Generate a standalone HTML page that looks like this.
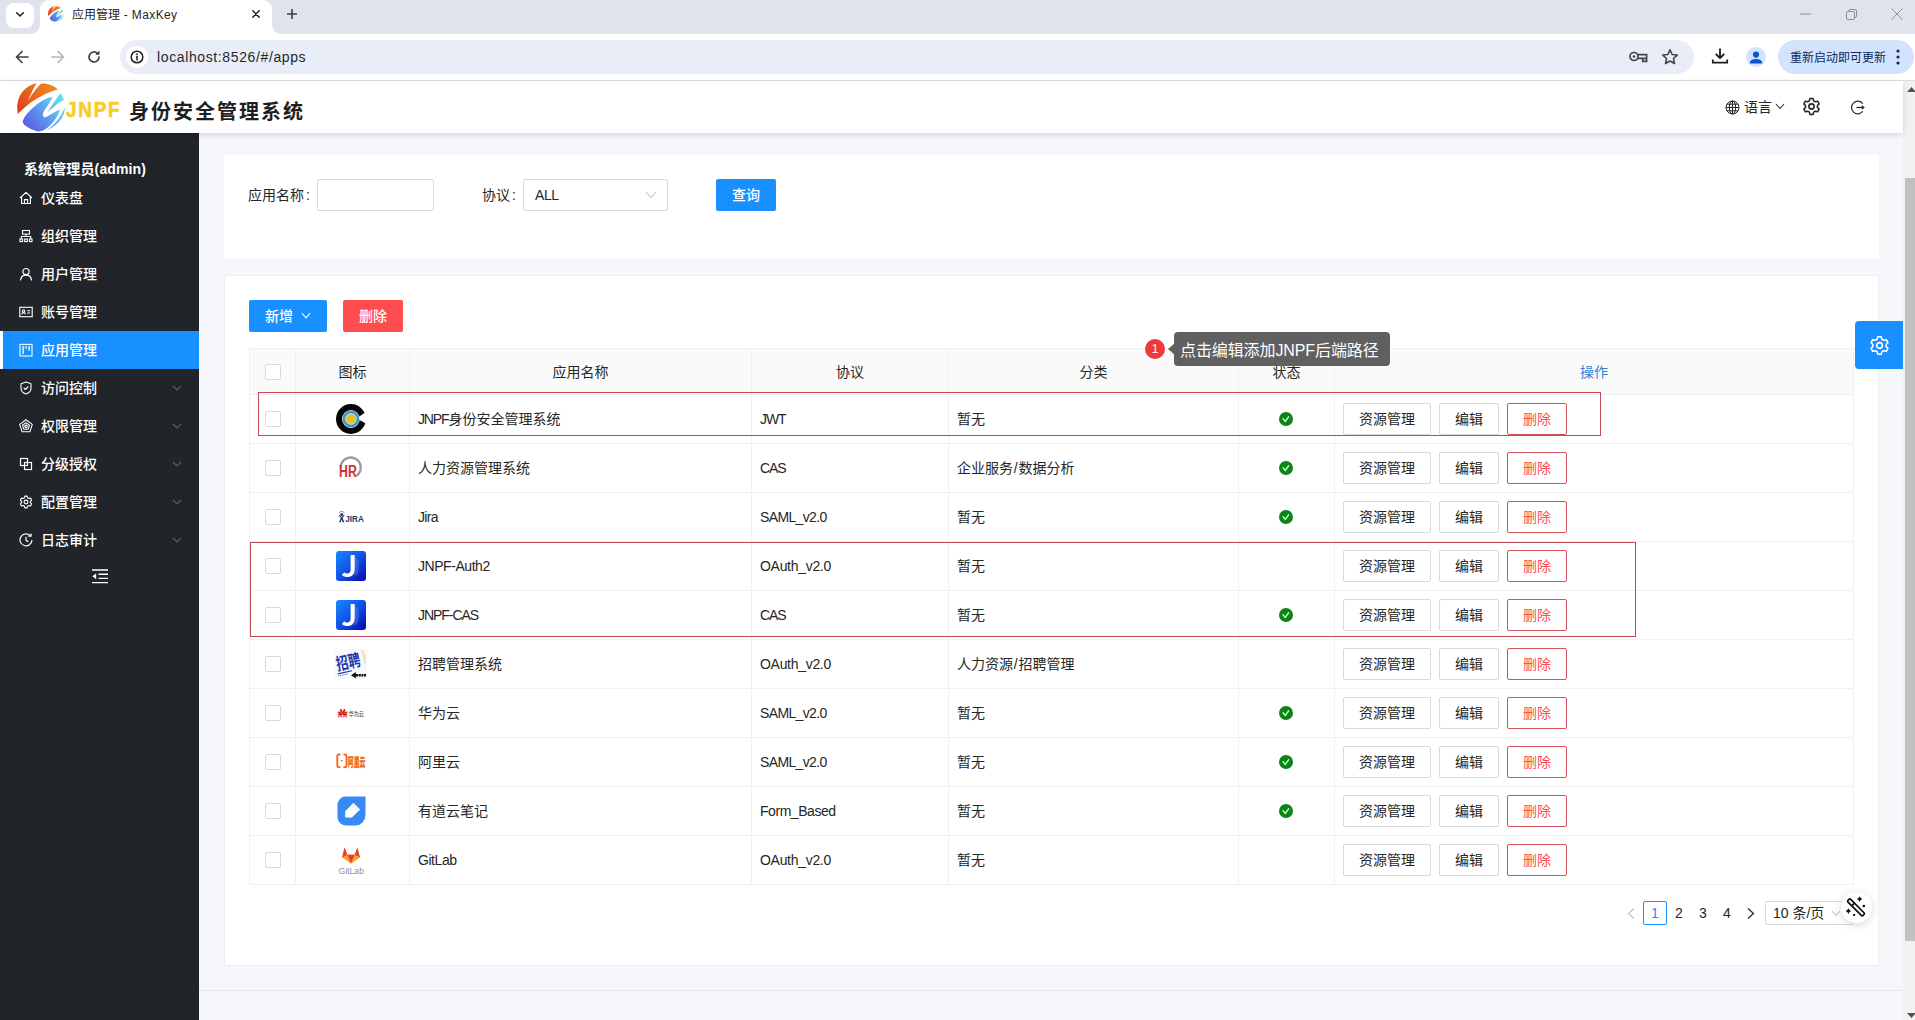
<!DOCTYPE html>
<html lang="zh-CN">
<head>
<meta charset="utf-8">
<title>应用管理 - MaxKey</title>
<style>
*{box-sizing:border-box;margin:0;padding:0}
html,body{width:1915px;height:1020px;overflow:hidden}
body{position:relative;background:#f5f7fa;font-family:"Liberation Sans","Noto Sans CJK SC",sans-serif;font-size:14px;color:#262626;line-height:1}
.abs{position:absolute}
svg{display:block}
/* ---------- browser chrome ---------- */
#tabstrip{left:0;top:0;width:1915px;height:34px;background:#dfe3ec}
#tabsearch{left:6px;top:3px;width:28px;height:25px;background:#fff;border-radius:8px}
#tab{left:40px;top:0;width:232px;height:34px;background:#fff;border-radius:9px 9px 0 0}
#tab:before,#tab:after{content:"";position:absolute;bottom:0;width:9px;height:9px}
#tab:before{left:-9px;background:radial-gradient(circle at 0 0,transparent 8.5px,#fff 9px)}
#tab:after{right:-9px;background:radial-gradient(circle at 100% 0,transparent 8.5px,#fff 9px)}
#tabtitle{left:72px;top:8px;font-size:12px;line-height:14px;color:#1f1f1f;white-space:nowrap}
#toolbar{left:0;top:34px;width:1915px;height:46px;background:#fff}
#tbline{left:0;top:80px;width:1915px;height:1px;background:#dcdee1}
#urlbar{left:120px;top:40px;width:1574px;height:34px;border-radius:17px;background:#e9edf7}
#urlinfo{left:126px;top:46px;width:22px;height:22px;border-radius:11px;background:#fff}
#urltext{left:157px;top:49px;font-size:14px;line-height:16px;color:#25282d;white-space:nowrap;letter-spacing:.62px}
#avatar{left:1746px;top:47px;width:20px;height:20px;border-radius:10px;background:#d3e3fd;overflow:hidden}
#upd{left:1778px;top:40px;width:136px;height:34px;border-radius:17px;background:#d3e3fd}
#updtext{left:1790px;top:51px;font-size:12px;line-height:14px;color:#0b2a5c;white-space:nowrap}
/* ---------- app header ---------- */
#hdr{left:0;top:81px;width:1903px;height:52px;background:#fff;box-shadow:0 2px 6px rgba(0,0,0,.13);z-index:5}
#jnpf{left:66px;top:98px;font-size:21.5px;line-height:24px;font-weight:700;letter-spacing:2px;transform:scaleX(.88);transform-origin:0 0;-webkit-text-stroke:.6px #f8cb28;color:#f8cb28;z-index:6;white-space:nowrap}
#sysname{left:129px;top:100px;font-size:20px;line-height:24px;font-weight:700;letter-spacing:2px;color:#1f1f1f;z-index:6;white-space:nowrap}
#lang{left:1744px;top:99px;font-size:14px;line-height:16px;color:#262626;z-index:6;white-space:nowrap}
/* ---------- sidebar ---------- */
#side{left:0;top:133px;width:199px;height:887px;background:#212429}
#who{left:24px;top:161px;letter-spacing:.12px;font-size:14px;line-height:16px;font-weight:700;color:#fff;white-space:nowrap}
.mi{position:absolute;left:0;width:199px;height:38px;color:#fff;font-weight:500;font-size:14px;line-height:38px;white-space:nowrap}
.mi span{position:absolute;left:41px;top:0}
.mi svg{position:absolute;left:19px;top:12px}
.mi svg.ar{left:172px;top:14px}
.mi.on{background:#1890ff;border-left:3px solid #fff}
.mi.on span{left:38px}
.mi.on svg{left:16px}
/* ---------- scrollbar ---------- */
#sbtrack{left:1903px;top:81px;width:12px;height:939px;background:#f1f1f1}
#sbthumb{left:1905px;top:178px;width:10px;height:763px;background:#c1c1c1}
/* ---------- cards ---------- */
#card1{left:224px;top:155px;width:1655px;height:104px;background:#fff}
#card2{left:224px;top:275px;width:1655px;height:691px;background:#fff;border:1px solid #f0f0f0}
.lbl{position:absolute;font-size:14px;line-height:16px;color:#262626;white-space:nowrap}
.inp{position:absolute;height:32px;border:1px solid #d9d9d9;border-radius:2px;background:#fff}
.btn{position:absolute;height:32px;border-radius:2px;font-size:14px;line-height:32px;text-align:center;white-space:nowrap}
.btn.pri{background:#1890ff;color:#fff;font-weight:500}
.btn.dan{background:#ff4d4f;color:#fff;font-weight:500}
.btn.def{background:#fff;border:1px solid #d9d9d9;color:#262626;line-height:30px}
.btn.dl{background:#fff;border:1px solid #d4505a;color:#ff4d4f;line-height:30px}
#footline{left:199px;top:990px;width:1704px;height:1px;background:#e6e8ec}
</style>
</head>
<body>
<div id="tabstrip" class="abs"></div>
<div id="tabsearch" class="abs"></div>
<svg class="abs" style="left:15px;top:10.500px" width="10" height="6.700" viewBox="0 0 12 8"><path d="M2 2l4 4 4-4" fill="none" stroke="#1f1f1f" stroke-width="1.8" stroke-linecap="round" stroke-linejoin="round"/></svg>
<div id="tab" class="abs"></div>
<svg class="abs" style="left:47px;top:5px" width="17.500" height="17.500" viewBox="0 0 1020 1020"><use href="#logo"/></svg>
<div id="tabtitle" class="abs">应用管理<span style="letter-spacing:.38px"> - MaxKey</span></div>
<svg class="abs" style="left:252px;top:10px" width="8" height="8" viewBox="0 0 8 8"><path d="M.8 .8l6.400 6.400M7.200 .8L.8 7.200" stroke="#1f1f1f" stroke-width="1.500" stroke-linecap="round"/></svg>
<svg class="abs" style="left:287px;top:9px" width="10" height="10" viewBox="0 0 10 10"><path d="M5 .5v9M.5 5h9" stroke="#3c4043" stroke-width="1.600" stroke-linecap="round"/></svg>
<!-- window controls -->
<svg class="abs" style="left:1800px;top:13px" width="11" height="2" viewBox="0 0 11 2"><path d="M0 1h11" stroke="#8a8f98" stroke-width="1"/></svg>
<svg class="abs" style="left:1846px;top:9px" width="11" height="11" viewBox="0 0 11 11"><rect x=".5" y="2.5" width="8" height="8" rx="1.5" fill="none" stroke="#8a8f98"/><path d="M2.5 2.5v-.5a1.5 1.5 0 0 1 1.5-1.5h5a1.5 1.5 0 0 1 1.5 1.5v5a1.5 1.5 0 0 1-1.5 1.5h-.5" fill="none" stroke="#8a8f98"/></svg>
<svg class="abs" style="left:1891px;top:8px" width="12" height="12" viewBox="0 0 12 12"><path d="M.5.5l11 11M11.500 .5l-11 11" stroke="#8a8f98" stroke-width="1"/></svg>
<!-- toolbar -->
<div id="toolbar" class="abs"></div>
<div id="tbline" class="abs"></div>
<svg class="abs" style="left:15px;top:50px" width="14" height="14" viewBox="0 0 14 14"><path d="M13 7H2M7 1.500L1.500 7 7 12.500" fill="none" stroke="#3c4043" stroke-width="1.7" stroke-linecap="round" stroke-linejoin="round"/></svg>
<svg class="abs" style="left:51px;top:50px" width="14" height="14" viewBox="0 0 14 14"><path d="M1 7h11M7 1.500L12.500 7 7 12.500" fill="none" stroke="#b4b7bc" stroke-width="1.7" stroke-linecap="round" stroke-linejoin="round"/></svg>
<svg class="abs" style="left:86px;top:49px" width="16" height="16" viewBox="0 0 16 16"><path d="M13 8a5 5 0 1 1-1.600-3.700" fill="none" stroke="#3c4043" stroke-width="1.7" stroke-linecap="round"/><path d="M13.500 1.500v4.200H9.300z" fill="#3c4043"/></svg>
<div id="urlbar" class="abs"></div>
<div id="urlinfo" class="abs"></div>
<svg class="abs" style="left:130px;top:50px" width="14" height="14" viewBox="0 0 14 14"><circle cx="7" cy="7" r="5.800" fill="none" stroke="#1f1f1f" stroke-width="1.500"/><path d="M7 6.300v3.700" stroke="#1f1f1f" stroke-width="1.500" stroke-linecap="round"/><circle cx="7" cy="4.100" r=".95" fill="#1f1f1f"/></svg>
<div id="urltext" class="abs">localhost:8526/#/apps</div>
<!-- key -->
<svg class="abs" style="left:1629px;top:51px" width="19" height="12" viewBox="0 0 19 12"><circle cx="5" cy="5.500" r="4" fill="none" stroke="#444746" stroke-width="1.700"/><circle cx="5" cy="5.500" r="1.300" fill="#444746"/><path d="M9 3.600h8.600v3.800M13.800 7.400h3.800v3h-3.800zM9 7.400h5" fill="none" stroke="#444746" stroke-width="1.700"/></svg>
<!-- star -->
<svg class="abs" style="left:1661px;top:48px" width="18" height="18" viewBox="0 0 18 18"><path d="M9 1.800l2.150 4.700 5.100.55-3.800 3.450 1.050 5.050L9 13l-4.500 2.550 1.050-5.050-3.800-3.450 5.100-.55z" fill="none" stroke="#444746" stroke-width="1.600" stroke-linejoin="round"/></svg>
<!-- download -->
<svg class="abs" style="left:1711px;top:47px" width="18" height="18" viewBox="0 0 18 18"><path d="M9 1.500v9.500M4.800 7L9 11.200 13.200 7M1.800 12.500v3.200h14.400v-3.200" fill="none" stroke="#1f1f1f" stroke-width="1.800" stroke-linejoin="round"/></svg>
<div id="avatar" class="abs"><svg width="20" height="20" viewBox="0 0 20 20"><circle cx="10" cy="7.600" r="3.100" fill="#0b57d0"/><path d="M3.800 16.400c0-3.200 3.100-4.400 6.200-4.400s6.200 1.200 6.200 4.400z" fill="#0b57d0"/></svg></div>
<div id="upd" class="abs"></div>
<div id="updtext" class="abs">重新启动即可更新</div>
<svg class="abs" style="left:1896px;top:49px" width="4" height="16" viewBox="0 0 4 16"><circle cx="2" cy="2" r="1.600" fill="#0b2a5c"/><circle cx="2" cy="8" r="1.600" fill="#0b2a5c"/><circle cx="2" cy="14" r="1.600" fill="#0b2a5c"/></svg>

<svg width="0" height="0" style="position:absolute"><defs>
<linearGradient id="lgO" gradientUnits="userSpaceOnUse" x1="80" y1="600" x2="800" y2="100"><stop offset="0" stop-color="#e03c1e"/><stop offset=".5" stop-color="#ea6a1c"/><stop offset="1" stop-color="#ee8e1e"/></linearGradient>
<linearGradient id="lgB" gradientUnits="userSpaceOnUse" x1="200" y1="880" x2="930" y2="300"><stop offset="0" stop-color="#5c5ade"/><stop offset=".45" stop-color="#5b97f3"/><stop offset=".8" stop-color="#5fd0ea"/><stop offset="1" stop-color="#62e2ee"/></linearGradient>
<g id="logo">
<path d="M75 640C40 500 70 330 170 210 240 130 330 80 430 60 380 130 320 260 268 395 330 290 420 150 510 72 620 50 740 100 830 180 650 220 450 330 300 440 200 520 120 590 75 640z" fill="url(#lgO)"/>
<path d="M165 780C180 700 300 560 420 470 520 390 640 330 730 322 700 400 620 500 560 600 530 650 540 705 595 705 680 660 780 590 865 555 850 640 780 760 690 850 630 910 560 960 480 975 380 960 250 900 190 840 170 815 162 800 165 780z" fill="url(#lgB)"/>
<path d="M880 245L945 380C880 400 800 470 740 520L630 610C700 500 800 350 880 245z" fill="url(#lgB)"/>
<path d="M955 520C975 640 880 830 620 950 760 860 890 700 955 520z" fill="url(#lgB)"/>
</g>
<g id="gear" fill="none" stroke-linejoin="round"><path d="M14.72 4.90 L13.95 1.99 L10.05 1.99 L9.28 4.90 L7.22 6.09 L4.30 5.31 L2.36 8.68 L4.49 10.81 L4.49 13.19 L2.36 15.32 L4.30 18.69 L7.22 17.91 L9.28 19.10 L10.05 22.01 L13.95 22.01 L14.72 19.10 L16.78 17.91 L19.70 18.69 L21.64 15.32 L19.51 13.19 L19.51 10.81 L21.64 8.68 L19.70 5.31 L16.78 6.09Z"/><circle cx="12" cy="12" r="3.300"/></g>
</defs></svg>
<div id="hdr" class="abs"></div>
<svg class="abs" style="left:14px;top:80px;z-index:6" width="54" height="54" viewBox="0 0 1020 1020"><use href="#logo"/></svg>
<div id="jnpf" class="abs">JNPF</div>
<div id="sysname" class="abs">身份安全管理系统</div>
<!-- globe -->
<svg class="abs" style="left:1724.500px;top:99.500px;z-index:6" width="15" height="15" viewBox="0 0 15 15"><g fill="none" stroke="#262626" stroke-width="1"><circle cx="7.500" cy="7.500" r="6.500"/><ellipse cx="7.500" cy="7.500" rx="3.200" ry="6.500"/><path d="M7.500 1v13M1 7.500h13M2 4.200h11M2 10.800h11"/></g></svg>
<div id="lang" class="abs">语言</div>
<svg class="abs" style="left:1775px;top:103px;z-index:6" width="10" height="7" viewBox="0 0 10 7"><path d="M1 1l4 4.500L9 1" fill="none" stroke="#262626" stroke-width="1.100"/></svg>
<!-- gear -->
<svg class="abs" style="left:1802px;top:97px;z-index:6" width="19" height="19" viewBox="0 0 24 24"><use href="#gear" stroke="#262626" stroke-width="2"/></svg>
<!-- logout -->
<svg class="abs" style="left:1850px;top:99.500px;z-index:6" width="16" height="15" viewBox="0 0 16 15"><path d="M12.800 3.600A6.300 6.300 0 1 0 12.800 11.400" fill="none" stroke="#262626" stroke-width="1.200"/><path d="M6.500 7.500h6.500" stroke="#262626" stroke-width="1.300"/><path d="M11.800 5.200l3 2.300-3 2.300z" fill="#262626"/></svg>

<div id="side" class="abs"></div>
<div id="who" class="abs">系统管理员(admin)</div>
<div class="mi" style="top:179px"><svg width="14" height="14" viewBox="0 0 14 14"><path d="M1 7L7 1.300 13 7M2.600 5.800v6.700h8.800V5.800M5.400 12.500V8.600h3.200v3.900" fill="none" stroke="#fff" stroke-width="1.100" stroke-linejoin="round"/></svg><span>仪表盘</span></div>
<div class="mi" style="top:217px"><svg width="14" height="14" viewBox="0 0 14 14"><g fill="none" stroke="#fff" stroke-width="1.100"><rect x="3.500" y="1.500" width="7" height="3.600"/><path d="M7 5.100v2.400M2.300 10V7.500h9.400V10"/><rect x="1" y="10" width="2.600" height="2.600"/><rect x="5.700" y="10" width="2.600" height="2.600"/><rect x="10.400" y="10" width="2.600" height="2.600"/></g></svg><span>组织管理</span></div>
<div class="mi" style="top:255px"><svg width="14" height="14" viewBox="0 0 14 14"><g fill="none" stroke="#fff" stroke-width="1.200"><circle cx="7" cy="4.600" r="3.100"/><path d="M1.600 13c.3-3 2.600-4.900 5.400-4.900s5.100 1.900 5.400 4.900" stroke-linecap="round"/></g></svg><span>用户管理</span></div>
<div class="mi" style="top:293px"><svg width="14" height="14" viewBox="0 0 14 14"><g fill="none" stroke="#fff" stroke-width="1.100"><rect x=".8" y="2.300" width="12.400" height="9.400"/><circle cx="4.600" cy="6" r="1.200"/><path d="M2.800 9.400c.2-1.300 1-1.800 1.800-1.800s1.600.5 1.800 1.800M8.200 5.700h3M8.200 8h3"/></g></svg><span>账号管理</span></div>
<div class="mi on" style="top:331px"><svg width="14" height="14" viewBox="0 0 14 14"><g fill="none" stroke="#fff" stroke-width="1.100"><rect x="1" y="1.400" width="12" height="11.600"/><path d="M4.100 2.900v8M7 2.900v2.800M10.100 2.900v4.800" stroke-width="1.300"/></g></svg><span>应用管理</span></div>
<div class="mi" style="top:369px"><svg width="14" height="14" viewBox="0 0 14 14"><g fill="none" stroke="#fff" stroke-width="1.100" stroke-linejoin="round"><path d="M7 1L2 2.800v4.400c0 2.800 2.200 4.800 5 5.800 2.800-1 5-3 5-5.800V2.800z"/><path d="M4.700 6.800l1.700 1.700 3-3.200"/></g></svg><span>访问控制</span><svg class="ar" width="10" height="10" viewBox="0 0 10 10"><path d="M1 3l4 4 4-4" fill="none" stroke="#5b5e64" stroke-width="1.200"/></svg></div>
<div class="mi" style="top:407px"><svg width="14" height="14" viewBox="0 0 14 14"><g fill="none" stroke="#fff" stroke-width="1.100" stroke-linejoin="round"><path d="M7 .8l6.300 4.600-2.400 7.400H3.100L.7 5.400z"/><path d="M7 3.600l3.500 2.600-1.300 4.100H4.800L3.500 6.200z"/><path d="M7 6l1.300 1-.5 1.600H6.200L5.700 7z"/></g></svg><span>权限管理</span><svg class="ar" width="10" height="10" viewBox="0 0 10 10"><path d="M1 3l4 4 4-4" fill="none" stroke="#5b5e64" stroke-width="1.200"/></svg></div>
<div class="mi" style="top:445px"><svg width="14" height="14" viewBox="0 0 14 14"><g fill="none" stroke="#fff" stroke-width="1.200"><rect x="1.500" y="1.500" width="7" height="7"/><rect x="5.500" y="5.500" width="7" height="7"/></g></svg><span>分级授权</span><svg class="ar" width="10" height="10" viewBox="0 0 10 10"><path d="M1 3l4 4 4-4" fill="none" stroke="#5b5e64" stroke-width="1.200"/></svg></div>
<div class="mi" style="top:483px"><svg width="14" height="14" viewBox="0 0 24 24"><use href="#gear" stroke="#fff" stroke-width="1.900"/></svg><span>配置管理</span><svg class="ar" width="10" height="10" viewBox="0 0 10 10"><path d="M1 3l4 4 4-4" fill="none" stroke="#5b5e64" stroke-width="1.200"/></svg></div>
<div class="mi" style="top:521px"><svg width="14" height="14" viewBox="0 0 14 14"><g fill="none" stroke="#fff" stroke-width="1.200"><path d="M11.800 3.200A6 6 0 1 0 13 7"/><path d="M7 3.800V7.300l2.400 1.500M9.300 3.200h2.700V.6"/></g></svg><span>日志审计</span><svg class="ar" width="10" height="10" viewBox="0 0 10 10"><path d="M1 3l4 4 4-4" fill="none" stroke="#5b5e64" stroke-width="1.200"/></svg></div>
<svg class="abs" style="left:92px;top:569px" width="16" height="15" viewBox="0 0 16 15"><path d="M0 1h16M6.500 5.200H16M6.500 9.400H16M0 13.600h16" stroke="#fff" stroke-width="1.400"/><path d="M4.200 4.300v6L.4 7.300z" fill="#fff"/></svg>
<div id="sbtrack" class="abs"></div>
<div id="sbthumb" class="abs"></div>
<svg class="abs" style="left:1907px;top:87px" width="8" height="5" viewBox="0 0 8 5"><path d="M0 5L4.500 0 9 5z" fill="#505050"/></svg>
<svg class="abs" style="left:1907px;top:1013px" width="8" height="5" viewBox="0 0 8 5"><path d="M0 0L4.500 5 9 0z" fill="#505050"/></svg>

<style>
#tbl{position:absolute;left:249px;top:348px;width:1605px;border-collapse:separate;border-spacing:0;table-layout:fixed;border-left:1px solid #f0f0f0;border-top:1px solid #f0f0f0;font-size:14px}
#tbl th,#tbl td{border-right:1px solid #f0f0f0;border-bottom:1px solid #f0f0f0;padding:0 8px;vertical-align:middle;white-space:nowrap;overflow:hidden}
#tbl th{height:46px;background:#fafafa;font-weight:400;text-align:center;color:#262626}
#tbl td{height:49px;background:#fff;text-align:left;color:#262626}
#tbl td.c,#tbl th.c{text-align:center}
#tbl td.c svg{margin:0 auto;position:relative;left:-1.500px}
#tbl td.c svg.ok{left:-.5px}
.l{letter-spacing:-.45px}
.cb{display:block;width:16px;height:16px;border:1px solid #d9d9d9;border-radius:2px;background:#fff;margin:0 auto}
.ops{position:relative;height:32px}
.ops .btn{top:0}
.pg{position:absolute;top:901px;height:24px;line-height:24px;font-size:14px;color:#262626;text-align:center;white-space:nowrap}
.redbox{position:absolute;border:1px solid #c04a56;z-index:3}
</style>
<div id="card1" class="abs"></div>
<div class="lbl" style="left:248px;top:187px">应用名称<span style="margin-left:2px">:</span></div>
<div class="inp" style="left:317px;top:179px;width:117px"></div>
<div class="lbl" style="left:482px;top:187px">协议<span style="margin-left:2px">:</span></div>
<div class="inp" style="left:523px;top:179px;width:145px"></div>
<div class="lbl l" style="left:535px;top:187px">ALL</div>
<svg class="abs" style="left:645px;top:191px" width="12" height="8" viewBox="0 0 12 8"><path d="M1 1l5 5.500L11 1" fill="none" stroke="#bfbfbf" stroke-width="1.100"/></svg>
<div class="btn pri" style="left:716px;top:179px;width:60px">查询</div>
<div id="card2" class="abs"></div>
<div class="btn pri" style="left:249px;top:300px;width:78px;text-align:left;padding-left:16px">新增</div>
<svg class="abs" style="left:301px;top:312px" width="10" height="8" viewBox="0 0 10 8"><path d="M.800 1l4.200 4.800L9.200 1" fill="none" stroke="#fff" stroke-width="1.100"/></svg>
<div class="btn dan" style="left:343px;top:300px;width:60px">删除</div>
<table id="tbl"><colgroup><col style="width:46px"><col style="width:114px"><col style="width:342px"><col style="width:197px"><col style="width:290px"><col style="width:96px"><col style="width:519px"></colgroup>
<tr><th><i class="cb"></i></th><th>图标</th><th>应用名称</th><th>协议</th><th>分类</th><th>状态</th><th style="color:#2b83d9">操作</th></tr>
<tr><td><i class="cb"></i></td><td class="c"><svg width="30" height="30" viewBox="0 0 30 30"><circle cx="14.900" cy="15" r="11.900" fill="none" stroke="#050505" stroke-width="6"/><path d="M20.500 14.400L31 7.400V20z" fill="#fff"/><circle cx="14.900" cy="15" r="8.400" fill="#3d97cb"/><circle cx="14.900" cy="15" r="5.700" fill="#cfe5f1"/><circle cx="14.900" cy="15" r="4.800" fill="#e2c11f"/></svg></td><td><span class="l" style="letter-spacing:-1.150px">JNPF</span>身份安全管理系统</td><td><span class="l" style="letter-spacing:-1.05px">JWT</span></td><td>暂无</td><td class="c"><svg class="ok" width="14" height="14" viewBox="0 0 14 14"><circle cx="7" cy="7" r="7" fill="#0b8518"/><path d="M3.700 6.400L6.300 9.300 9.900 4.300" fill="none" stroke="#d8ffd8" stroke-width="1.400"/></svg></td><td><div class="ops"><div class="btn def" style="left:0;width:88px">资源管理</div><div class="btn def" style="left:96px;width:60px">编辑</div><div class="btn dl" style="left:164px;width:60px">删除</div></div></td></tr>
<tr><td><i class="cb"></i></td><td class="c"><svg width="30" height="30" viewBox="0 0 30 30"><path d="M4.700 14.600A10 10 0 1 1 20.500 22.700" fill="none" stroke="#9c9c9c" stroke-width="2.400"/><text x="3" y="24.400" font-family="Liberation Sans,sans-serif" font-weight="700" font-size="16" fill="#d0312d" textLength="17.800" lengthAdjust="spacingAndGlyphs">HR</text></svg></td><td>人力资源管理系统</td><td><span class="l" style="letter-spacing:-1.15px">CAS</span></td><td>企业服务<span style="margin:0 .8px">/</span>数据分析</td><td class="c"><svg class="ok" width="14" height="14" viewBox="0 0 14 14"><circle cx="7" cy="7" r="7" fill="#0b8518"/><path d="M3.700 6.400L6.300 9.300 9.900 4.300" fill="none" stroke="#d8ffd8" stroke-width="1.400"/></svg></td><td><div class="ops"><div class="btn def" style="left:0;width:88px">资源管理</div><div class="btn def" style="left:96px;width:60px">编辑</div><div class="btn dl" style="left:164px;width:60px">删除</div></div></td></tr>
<tr><td><i class="cb"></i></td><td class="c"><svg width="30" height="30" viewBox="0 0 30 30"><g fill="#1f3b63"><circle cx="5.700" cy="12.600" r="1.500"/><path d="M2.600 13.200l2.200 2.700-1.800 4.400h1.700l1-2.700 1 2.700h1.700L6.600 15.900l2.200-2.700H7.400L5.700 15.300 4 13.200z"/><path d="M3.200 11.200a2.600 2.600 0 0 1 5 0" fill="none" stroke="#4a7ab5" stroke-width=".8"/></g><text x="9.200" y="20.300" font-family="Liberation Sans,sans-serif" font-weight="700" font-size="9.600" fill="#1f3b63" textLength="18.600" lengthAdjust="spacingAndGlyphs">JIRA</text></svg></td><td><span class="l" style="letter-spacing:-0.7px">Jira</span></td><td><span class="l" style="letter-spacing:-0.65px">SAML_v2.0</span></td><td>暂无</td><td class="c"><svg class="ok" width="14" height="14" viewBox="0 0 14 14"><circle cx="7" cy="7" r="7" fill="#0b8518"/><path d="M3.700 6.400L6.300 9.300 9.900 4.300" fill="none" stroke="#d8ffd8" stroke-width="1.400"/></svg></td><td><div class="ops"><div class="btn def" style="left:0;width:88px">资源管理</div><div class="btn def" style="left:96px;width:60px">编辑</div><div class="btn dl" style="left:164px;width:60px">删除</div></div></td></tr>
<tr><td><i class="cb"></i></td><td class="c"><svg width="30" height="30" viewBox="0 0 30 30"><defs><linearGradient id="jg5" x1="0" y1="0" x2="1" y2="1"><stop offset="0" stop-color="#178cff"/><stop offset=".5" stop-color="#1250e6"/><stop offset="1" stop-color="#0609a8"/></linearGradient></defs><rect width="30" height="30" rx="3" fill="url(#jg5)"/><path d="M18.700 5.200L22.600 9.800V19c0 3-1.600 5.600-4.600 6.600.500-2.600.700-4.600.700-7.100z" fill="#86a4ff" opacity=".3"/><path d="M14.600 4.100H18.700V18.500C18.700 23.500 15.500 26.100 11.500 26.100 9.300 26.100 7.300 25.300 6 23.900L8.200 21.200C9 22.200 10.200 22.600 11.300 22.600 13.400 22.600 14.600 21.200 14.600 18.500z" fill="#fff"/></svg></td><td><span class="l">JNPF-Auth2</span></td><td><span class="l" style="letter-spacing:-0.3px">OAuth_v2.0</span></td><td>暂无</td><td class="c"></td><td><div class="ops"><div class="btn def" style="left:0;width:88px">资源管理</div><div class="btn def" style="left:96px;width:60px">编辑</div><div class="btn dl" style="left:164px;width:60px">删除</div></div></td></tr>
<tr><td><i class="cb"></i></td><td class="c"><svg width="30" height="30" viewBox="0 0 30 30"><defs><linearGradient id="jg6" x1="0" y1="0" x2="1" y2="1"><stop offset="0" stop-color="#178cff"/><stop offset=".5" stop-color="#1250e6"/><stop offset="1" stop-color="#0609a8"/></linearGradient></defs><rect width="30" height="30" rx="3" fill="url(#jg6)"/><path d="M18.700 5.200L22.600 9.800V19c0 3-1.600 5.600-4.600 6.600.500-2.600.700-4.600.700-7.100z" fill="#86a4ff" opacity=".3"/><path d="M14.600 4.100H18.700V18.500C18.700 23.500 15.500 26.100 11.500 26.100 9.300 26.100 7.300 25.300 6 23.900L8.200 21.200C9 22.200 10.200 22.600 11.300 22.600 13.400 22.600 14.600 21.200 14.600 18.500z" fill="#fff"/></svg></td><td><span class="l" style="letter-spacing:-1.05px">JNPF-CAS</span></td><td><span class="l" style="letter-spacing:-1.15px">CAS</span></td><td>暂无</td><td class="c"><svg class="ok" width="14" height="14" viewBox="0 0 14 14"><circle cx="7" cy="7" r="7" fill="#0b8518"/><path d="M3.700 6.400L6.300 9.300 9.900 4.300" fill="none" stroke="#d8ffd8" stroke-width="1.400"/></svg></td><td><div class="ops"><div class="btn def" style="left:0;width:88px">资源管理</div><div class="btn def" style="left:96px;width:60px">编辑</div><div class="btn dl" style="left:164px;width:60px">删除</div></div></td></tr>
<tr><td><i class="cb"></i></td><td class="c"><svg width="32" height="30" viewBox="0 0 32 30"><rect x="0" y="0" width="32" height="30" rx="2" fill="#f7f8fc"/><path d="M24.500 .6c3.200.7 5.500 3.200 6 6.800.3 2.500-.2 5.600 1 7.600-2.700-1.300-3.200-4.200-3.500-6.800-.3-2.900-1.200-5.500-3.500-7.600z" fill="#f8dba6"/><g transform="rotate(-12 13 13)"><text x="1" y="19.200" font-family="Liberation Sans,Noto Sans CJK SC,sans-serif" font-weight="700" font-size="17" fill="#2635ad" textLength="24.500" lengthAdjust="spacingAndGlyphs">招聘</text><path d="M.5 22.400h14.500" stroke="#2635ad" stroke-width="1.200"/><path d="M.5 24.600h10" stroke="#6a76cc" stroke-width=".9" stroke-dasharray="1.200 .6"/></g><path d="M16 26.200l4.800-3.200v2h2.400v2.400h-2.400v2zM23.800 25h2v2.400h-2zM26.400 25h2v2.400h-2zM29 25h2v2.400h-2z" fill="#111"/></svg></td><td>招聘管理系统</td><td><span class="l" style="letter-spacing:-0.3px">OAuth_v2.0</span></td><td>人力资源<span style="margin:0 .8px">/</span>招聘管理</td><td class="c"></td><td><div class="ops"><div class="btn def" style="left:0;width:88px">资源管理</div><div class="btn def" style="left:96px;width:60px">编辑</div><div class="btn dl" style="left:164px;width:60px">删除</div></div></td></tr>
<tr><td><i class="cb"></i></td><td class="c"><svg width="30" height="30" viewBox="0 0 30 30"><g fill="#e2231a"><ellipse cx="6.60" cy="14.50" rx="0.85" ry="2.20" transform="rotate(-82 6.60 17.30)"/><ellipse cx="6.60" cy="14.00" rx="1.05" ry="2.70" transform="rotate(-55 6.60 17.30)"/><ellipse cx="6.60" cy="13.60" rx="1.20" ry="3.10" transform="rotate(-19 6.60 17.30)"/><ellipse cx="6.60" cy="13.60" rx="1.20" ry="3.10" transform="rotate(19 6.60 17.30)"/><ellipse cx="6.60" cy="14.00" rx="1.05" ry="2.70" transform="rotate(55 6.60 17.30)"/><ellipse cx="6.60" cy="14.50" rx="0.85" ry="2.20" transform="rotate(82 6.60 17.30)"/></g><path d="M1.800 18.800h9.800" stroke="#b5221c" stroke-width=".9" stroke-dasharray="1.200 .45"/><text x="12.700" y="17.700" font-family="Liberation Sans,Noto Sans CJK SC,sans-serif" font-weight="500" font-size="5.300" fill="#444" textLength="15.200" lengthAdjust="spacingAndGlyphs">华为云</text></svg></td><td>华为云</td><td><span class="l" style="letter-spacing:-0.65px">SAML_v2.0</span></td><td>暂无</td><td class="c"><svg class="ok" width="14" height="14" viewBox="0 0 14 14"><circle cx="7" cy="7" r="7" fill="#0b8518"/><path d="M3.700 6.400L6.300 9.300 9.900 4.300" fill="none" stroke="#d8ffd8" stroke-width="1.400"/></svg></td><td><div class="ops"><div class="btn def" style="left:0;width:88px">资源管理</div><div class="btn def" style="left:96px;width:60px">编辑</div><div class="btn dl" style="left:164px;width:60px">删除</div></div></td></tr>
<tr><td><i class="cb"></i></td><td class="c"><svg width="30" height="30" viewBox="0 0 30 30"><g fill="none" stroke="#f26b1d" stroke-width="1.900"><path d="M4.400 7.500H2.900c-.9 0-1.600.700-1.600 1.600v9.400c0 .9.700 1.600 1.600 1.600h1.500"/><path d="M7.400 7.500h1.500c.9 0 1.600.700 1.600 1.600v9.400c0 .9-.7 1.600-1.600 1.600H7.400"/></g><path d="M4.800 13.800h2.200" stroke="#f26b1d" stroke-width="1.200"/><text x="11.800" y="19.600" font-family="Liberation Sans,Noto Sans CJK SC,sans-serif" font-weight="900" font-size="12.500" fill="#f26b1d" stroke="#f26b1d" stroke-width=".3" textLength="17.600" lengthAdjust="spacingAndGlyphs">阿里云</text></svg></td><td>阿里云</td><td><span class="l" style="letter-spacing:-0.65px">SAML_v2.0</span></td><td>暂无</td><td class="c"><svg class="ok" width="14" height="14" viewBox="0 0 14 14"><circle cx="7" cy="7" r="7" fill="#0b8518"/><path d="M3.700 6.400L6.300 9.300 9.900 4.300" fill="none" stroke="#d8ffd8" stroke-width="1.400"/></svg></td><td><div class="ops"><div class="btn def" style="left:0;width:88px">资源管理</div><div class="btn def" style="left:96px;width:60px">编辑</div><div class="btn dl" style="left:164px;width:60px">删除</div></div></td></tr>
<tr><td><i class="cb"></i></td><td class="c"><svg width="29" height="30" viewBox="0 0 30 30" preserveAspectRatio="none"><path d="M9 .5H29.500V19A10.500 10.500 0 0 1 19 29.500H9A8.500 8.500 0 0 1 .500 21V9A8.500 8.500 0 0 1 9 .5z" fill="#378af5"/><path d="M8.400 21.400v-6.200l8.600-8.200 6.800 6.400-8.400 8z" fill="#fff"/><path d="M17 7l6.800 6.400-3 2.900-6.800-6.500z" fill="#eef4ff"/></svg></td><td>有道云笔记</td><td><span class="l">Form_Based</span></td><td>暂无</td><td class="c"><svg class="ok" width="14" height="14" viewBox="0 0 14 14"><circle cx="7" cy="7" r="7" fill="#0b8518"/><path d="M3.700 6.400L6.300 9.300 9.900 4.300" fill="none" stroke="#d8ffd8" stroke-width="1.400"/></svg></td><td><div class="ops"><div class="btn def" style="left:0;width:88px">资源管理</div><div class="btn def" style="left:96px;width:60px">编辑</div><div class="btn dl" style="left:164px;width:60px">删除</div></div></td></tr>
<tr><td><i class="cb"></i></td><td class="c"><svg width="30" height="30" viewBox="0 0 30 30"><path d="M15 18.600L6.200 12.200 8.600 2.400l2.600 7.400h7.600l2.600-7.400 2.400 9.800z" fill="#fc6d26"/><path d="M15 18.600l-3.800-8.800h7.600z" fill="#e24329"/><path d="M15 18.600L6.200 12.200l5-2.400zM15 18.600l8.800-6.400-5-2.400z" fill="#fca326"/><path d="M8.600 2.400l2.600 7.400-5 2.400zM21.400 2.400l-2.600 7.400 5 2.400z" fill="#e24329"/><text x="2.400" y="29.200" font-family="Liberation Sans,sans-serif" font-size="8.800" fill="#8c929d" textLength="25.600" lengthAdjust="spacingAndGlyphs">GitLab</text></svg></td><td><span class="l">GitLab</span></td><td><span class="l" style="letter-spacing:-0.3px">OAuth_v2.0</span></td><td>暂无</td><td class="c"></td><td><div class="ops"><div class="btn def" style="left:0;width:88px">资源管理</div><div class="btn def" style="left:96px;width:60px">编辑</div><div class="btn dl" style="left:164px;width:60px">删除</div></div></td></tr>
</table>
<div class="redbox" style="left:258px;top:392px;width:1343px;height:44px"></div>
<div class="redbox" style="left:250px;top:542px;width:1386px;height:95px"></div>
<div class="abs" style="left:1145px;top:339px;width:20px;height:20px;border-radius:10px;background:#f03838;color:#fff;font-size:12px;line-height:20px;text-align:center;z-index:4">1</div>
<svg class="abs" style="left:1168px;top:343px;z-index:4" width="7" height="12" viewBox="0 0 7 12"><path d="M7 0v12L0 6z" fill="#606060"/></svg>
<div class="abs" style="left:1174px;top:332px;width:216px;height:34px;border-radius:4px;background:#606060;color:#fff;font-size:16px;line-height:38px;padding-left:6px;white-space:nowrap;z-index:4;letter-spacing:-.1px">点击编辑添加JNPF后端路径</div>
<svg class="abs" style="left:1627px;top:908px" width="8" height="11" viewBox="0 0 8 11"><path d="M7 .500L1.500 5.500 7 10.500" fill="none" stroke="#c4c4c4" stroke-width="1.100"/></svg>
<div class="pg" style="left:1643px;width:24px;border:1px solid #1890ff;border-radius:2px;line-height:22px;color:#1890ff;background:#fff">1</div>
<div class="pg" style="left:1667px;width:24px">2</div>
<div class="pg" style="left:1691px;width:24px">3</div>
<div class="pg" style="left:1715px;width:24px">4</div>
<svg class="abs" style="left:1747px;top:908px" width="8" height="11" viewBox="0 0 8 11"><path d="M1 .500L6.500 5.500 1 10.500" fill="none" stroke="#262626" stroke-width="1.200"/></svg>
<div class="inp" style="left:1765px;top:901px;width:89px;height:24px"></div>
<div class="pg" style="left:1773px">10 条/页</div>
<svg class="abs" style="left:1831px;top:910px" width="10" height="7" viewBox="0 0 10 7"><path d="M1 1l4 4.500L9 1" fill="none" stroke="#bfbfbf" stroke-width="1.100"/></svg>
<div class="abs" style="left:1840.500px;top:892px;width:31px;height:31px;border-radius:16px;background:#fff;box-shadow:0 2px 8px rgba(0,0,0,.15);z-index:7"></div>
<svg class="abs" style="left:1835px;top:887px;z-index:8" width="42" height="42" viewBox="0 0 1020 1020"><g transform="rotate(-45 510 495)"><rect x="464" y="236" width="92" height="518" rx="30" fill="#fff" stroke="#0a0a0a" stroke-width="40"/><path d="M464 396h92" stroke="#0a0a0a" stroke-width="38"/></g><path d="M598 222L623 265L666 290L623 315L598 358L573 315L530 290L573 265z" fill="#0a0a0a"/><path d="M325 517L350 560L393 585L350 610L325 653L300 610L257 585L300 560z" fill="#0a0a0a"/><circle cx="700" cy="462" r="31" fill="#0a0a0a"/><rect x="438" y="656" width="50" height="48" rx="10" fill="#0a0a0a"/></svg>
<div class="abs" style="left:1855px;top:321px;width:48px;height:48px;border-radius:4px 0 0 4px;background:#1890ff;z-index:7"></div>
<svg class="abs" style="left:1868.500px;top:334.500px;z-index:8" width="21" height="21" viewBox="0 0 24 24"><use href="#gear" stroke="#fff" stroke-width="1.800"/></svg>
<div id="footline" class="abs"></div>
</body>
</html>
